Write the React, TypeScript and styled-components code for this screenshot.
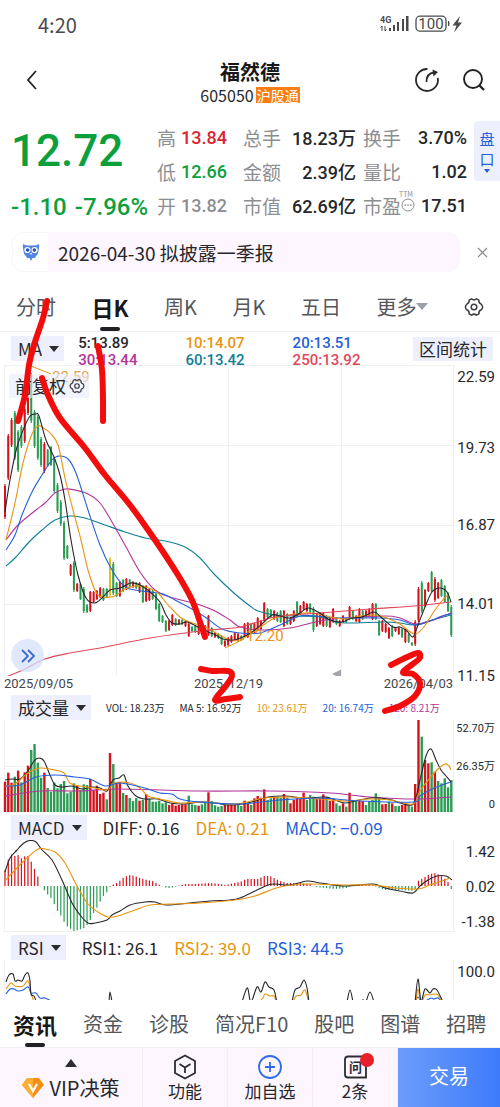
import React from "react";
import styled, { createGlobalStyle } from "styled-components";

const CJK = `"Noto Sans CJK SC", sans-serif`;
const NUM = `Roboto, "Noto Sans CJK SC", sans-serif`;

const c = {
  ink: "#26272b",
  grey: "#8d8e92",
  red: "#d5131c",
  green: "#2c9c54",
  price: "#0d9f3c",
  orange: "#e8940f",
  blue: "#2560d8",
  magenta: "#b5349b",
  teal: "#0f7f96",
  rose: "#e0495a",
  chip: "#edf0fc",
  line: "#f0f0f2",
};

const Global = createGlobalStyle`
  *, *::before, *::after { box-sizing: border-box; }
  body { margin: 0; background: #fff; color: ${c.ink}; font-family: ${CJK}; }
  button, select { font: inherit; color: inherit; border: 0; padding: 0; margin: 0; background: none; cursor: pointer; }
  svg { display: block; }
  dl, dd, dt, h1, p { margin: 0; }
`;

/* ---------- chart data ---------- */

type Pt = [number, number];

const curve = (p: Pt[]) => {
  let d = `M${p[0][0]} ${p[0][1]}`;
  for (let i = 0; i < p.length - 1; i++) {
    const a = p[i - 1] || p[i];
    const b = p[i];
    const e = p[i + 1];
    const f = p[i + 2] || e;
    d += `C${b[0] + (e[0] - a[0]) / 6} ${b[1] + (e[1] - a[1]) / 6} ${e[0] - (f[0] - b[0]) / 6} ${e[1] - (f[1] - b[1]) / 6} ${e[0]} ${e[1]}`;
  }
  return d;
};

const pts = (s: string): Pt[] => s.trim().split(/\s+/).map((q) => q.split(",").map(Number) as Pt);
const barX = (i: number, n: number) => 5 + (i * 446.3) / (n - 1);

const candles = `484-519R 434-480R 418-447R 411-460G 430-472G 425-448G 407-443R 390-415R 373-423G 410-448G 415-460G 437-467G 442-473R 449-467G 446-466G 457-493G 483-513G 500-526G 521-560G
545-559G 564-576R 561-592G 583-592R 583-600G 587-613G 604-613G 591-612R 591-603R 590-600R 587-598R 588-601G 588-598G 557-597Y 562-595G 582-597G 581-597R 579-592G 578-590R 579-588G 581-588R 582-589G 582-593R 585-603G 585-602R 588-601R 590-600G 593-610G 603-622G 615-623G 620-632G 620-631R 614-626R 618-626G 619-625R 619-625G 620-627R 623-637R 626-632G 625-633G 620-635R 627-635R 625-637R 615-636R 627-637G 632-638R 633-639G 635-645G 640-647R 637-646R 635-643R 632-640R 633-642R 635-641G 623-637R 622-638R
623-633G 623-633R 617-630R 620-630R 602-622R 608-618G 609-618G 610-620R 612-622G 610-623G 610-627R 613-625G 617-625R 610-622R 601-617G 605-615R 601-610R 603-612R 603-613G 607-632G 613-627R 612-625R 612-627R 615-627G 617-628R 608-623R 617-625G 620-627R 615-623R 618-623G 606-620R 610-620G 615-622R 608-623R 610-620G 610-618R 608-617R 603-620R 603-620G 620-636G 620-632R 623-633R 627-639R 625-637G 627-632R 627-635R 628-638G 628-643R 633-643G 642-646G 620-646R 587-622R 581-613G 589-607R 582-592R 571-592G 577-602R 582-599R 579-597G 585-603G 592-612G 605-637G`
  .trim()
  .split(/\s+/)
  .map((s) => {
    const [a, b] = s.slice(0, -1).split("-").map(Number);
    return { top: a, bottom: b, kind: s.slice(-1) };
  });

const volumes = `260R 233R 263R 245G 227R 262G 232R 212R 165G 147G 203G 248G 233R 279G 290G 262G 280G 267G 258G 295G 290G 265G 272R 285G 268G 270G 252R 285R 272R 297R 293R 313G 174R 207G 263R 263R 294G 300R 309G 318G 309G 317R 314G 297R 312G 320G 320G 317G 325G 322G 330R 325R 332R 330R 328R 328R 302G 328G 330G 332R 328G 322G 292R 318G 331G 335G 333G 330R 330R 328R 330R 325G 333G 317R 325R
330G 310R 303R 308R 283R 315G 310G 305R 305G 308G 297R 308G 325R 315R 310R 312R 293R 315G 300G 305G 312R 310R 298R 305G 318R 315R 325G 332G 325R 335G 293R 318G 318G 318R 318R 330G 318G 315G 295G 310G 328R 327R 320G 325R 333G 333G 330R 328R 330G 335G 267R 75R 125G 195R 205R 202G 230R 258G 265G 250G 277G 255G`
  .trim()
  .split(/\s+/)
  .map((s) => ({ h: (351 - Number(s.slice(0, -1))) / 3, kind: s.slice(-1) }));

const macdKeys = pts(`5,16 8,26 12,32 15,30 18,31 22,27 25,30 28,30 32,23 35,16 38,9 41,0 45,-5 48,-9 52,-13 55,-20 58,-26 62,-31 65,-38 68,-41 71,-43 74,-45 78,-44 81,-43 84,-42 88,-38 91,-33 94,-26 98,-20 101,-14 104,-9 108,-5 111,1 115,2 118,4 121,6 124,9 127,10 130,11 135,10 140,8 147,6 153,5 158,2 162,0 167,-2 171,-2 178,0 185,2 195,2 210,3 220,2 226,1 234,3 240,4 246,7 258,7 264,10 270,10 274,8 280,5 287,3 300,3 311,2 315,-1 325,-2 335,-3 347,-2 352,1 372,1 377,-1 385,-4 400,-4 414,-5 417,0 418,5 425,9 430,12 436,13 441,10 445,7 449,3 451,-3`);
const macdAt = (x: number) => {
  const k = macdKeys.findIndex((p) => p[0] >= x);
  if (k < 1) return macdKeys[k < 0 ? macdKeys.length - 1 : 0][1];
  const [x0, y0] = macdKeys[k - 1];
  const [x1, y1] = macdKeys[k];
  return y0 + ((y1 - y0) * (x - x0)) / (x1 - x0);
};

const averages: [string, string][] = [
  [c.teal, `6,566 15,558 30,541 42,530 55,520 70,516 85,518 105,525 125,532 145,538 165,541 185,547 200,558 215,575 235,594 250,606 258,611 275,615 295,616 320,617 335,622 350,623 385,622 400,623 415,625 432,620 451,615`],
  [c.magenta, `6,540 18,525 36,510 45,503 55,493 65,489 75,490 88,494 100,503 112,522 125,545 140,572 155,590 170,597 185,601 200,605 215,611 230,620 240,627 262,630 290,628 320,621 345,618 385,616 400,618 415,624 430,621 451,613`],
  [c.blue, `6,550 15,535 22,515 32,492 42,475 52,460 59,456 68,459 76,473 88,510 100,545 112,570 124,586 135,590 150,592 163,594 175,600 190,608 205,617 222,629 240,633 260,633 280,625 300,616 315,616 340,618 380,618 400,620 415,625 430,621 442,616 451,614`],
  [c.orange, `6,540 15,503 23,463 32,434 38,426 42,427 50,433 58,445 65,478 73,510 81,540 88,570 96,592 103,597 115,596 125,589 135,586 145,587 157,592 168,605 180,617 190,622 205,627 218,634 230,640 240,640 250,634 265,624 275,618 295,614 312,613 330,617 345,619 360,616 375,615 387,618 400,624 414,634 423,628 433,613 441,602 449,594`],
  [c.rose, `6,677 25,669 45,659 70,653 100,648 150,638 200,631 240,627 275,617 320,613 370,609 415,606 451,602`],
  [c.ink, `5,512 10,480 17,447 24,428 30,416 36,414 39,416 46,440 54,457 60,475 65,500 71,540 78,575 86,598 95,603 103,597 110,590 120,588 131,583 140,585 150,592 160,602 166,615 172,623 180,624 187,622 198,627 208,632 216,635 223,639 233,640 243,637 252,632 262,624 272,615 280,616 290,618 300,613 308,608 318,612 330,620 342,622 352,618 362,617 374,612 382,618 393,627 400,627 407,631 413,637 418,625 425,607 432,592 440,588 447,592 451,602`],
];

const volumeLines: [string, string][] = [
  [c.magenta, `5,796 40,791 80,791 120,789 200,791 270,791 330,793 370,797 415,799 451,797`],
  [c.ink, `5,780 12,779 20,779 28,771 34,761 39,758 44,761 50,775 55,785 62,787 72,786 82,789 92,787 100,788 107,791 113,780 119,778 124,775 128,786 136,796 145,799 158,799 170,803 185,804 200,802 215,803 228,805 243,804 255,801 268,797 285,796 305,798 325,797 335,800 345,803 355,801 370,798 380,798 392,800 400,803 412,805 416,797 420,780 426,756 431,749 436,760 441,770 446,776 451,782`],
  [c.orange, `5,786 15,784 28,773 40,768 55,770 64,773 70,783 80,786 95,788 107,790 115,783 130,783 140,788 148,796 160,799 180,803 205,802 235,804 265,798 290,797 320,799 345,801 370,799 390,800 413,804 420,791 430,778 438,769 445,764 449,766 451,770`],
  [c.blue, `5,786 20,785 36,777 55,775 75,777 90,779 105,786 120,783 145,788 160,793 172,794 180,799 200,802 240,804 280,800 320,798 360,801 413,802 420,796 432,789 451,782`],
];

const macdLines: [string, string][] = [
  [c.ink, `5,872 10,858 17,850 24,843 30,840.500 36,842 42,850 52,860 62,880 72,903 80,915 88,923 95,923 107,920 112,915 120,911 130,905 145,902 155,902 166,905 190,903 210,901 230,900 240,898 255,891 268,885 275,884 290,885 307,881 320,883 345,886 373,884 385,888 400,891 413,893 420,886 428,880 437,876 446,876 452,880`],
  [c.orange, `5,881 15,870 28,857 38,849 45,849 55,852 65,863 78,888 88,904 98,912 108,917 118,916 135,910 150,905 170,904 200,903 235,900 255,896 280,887 307,884 345,885 373,885 395,888 418,889 430,885 442,881 450,878`],
];

const rsiLines: [string, string][] = [
  [c.blue, `6,994 10,989 14,989 18,991 23,990 27,987 29,988 31,993 36,993 40,998 45,998 51,1001`],
  [c.blue, `415,1003 418,997 421,1003`],
  [c.blue, `426,1001 431,998 434,999 438,998 442,1002`],
  [c.orange, `6,989 11,983 15,986 23,986 27,981 29,983 31,993 34,1002`],
  [c.orange, `259,1002 263,998 265,994 270,996 274,996 277,1003`],
  [c.orange, `293,1002 296,996 301,995 305,990 309,1003`],
  [c.orange, `416,1002 418,989 421,1003 425,995 430,995 434,994 438,995 442,1002`],
  [c.ink, `6,982 9,975 13,974 15,981 18,980 22,981 25,975 28,973 30,981 31,994 34,996 36,1001`],
  [c.ink, `109,1002 110,992 112,1002`],
  [c.ink, `242,1002 246,990 248,989 251,1002 257,987 261,992 265,982 269,987 274,990 277,1003`],
  [c.ink, `292,1002 295,990 300,987 304,980 307,988 309,1003`],
  [c.ink, `347,1002 350,990 353,1002`],
  [c.ink, `362,1000 364,1000`],
  [c.ink, `366,1002 370,992 374,1002`],
  [c.ink, `415,1003 418,979 421,1001 425,989 430,993 433,989 437,990 443,1002`],
];

const kindColor = (k: string) => (k === "R" ? c.red : k === "G" ? c.green : "#dfc01b");

/* ---------- shell ---------- */

const Page = styled.main`
  position: relative;
  width: 100%;
  overflow: hidden;
`;

const StatusBar = styled.div`
  display: flex;
  align-items: center;
  justify-content: space-between;
  height: 48px;
  padding: 0 38px;
  font-size: 20px;
  color: #4a4a4c;
`;

const StatusIcons = styled.div`
  display: flex;
  align-items: center;
`;

const Header = styled.header`
  display: grid;
  grid-template-columns: 80px 1fr 90px;
  align-items: center;
  height: 64px;
  padding: 0 14px 0 24px;
`;

const Heading = styled.div`
  display: flex;
  flex-direction: column;
  align-items: center;
  padding-top: 6px;
`;

const Title = styled.h1`
  font-size: 20px;
  line-height: 24px;
  font-weight: 700;
  color: #17171a;
`;

const Code = styled.p`
  display: flex;
  align-items: center;
  gap: 2px;
  font-size: 16px;
  line-height: 22px;
`;

const Market = styled.span`
  background: #fb7d13;
  color: #fff;
  font-size: 14px;
  line-height: 16px;
  padding: 0 1px;
`;

const HeaderActions = styled.div`
  display: flex;
  justify-content: flex-end;
  gap: 22px;
`;

/* ---------- quote ---------- */

const Quote = styled.section`
  display: flex;
  height: 111px;
  padding-top: 8px;
`;

const PriceBlock = styled.div`
  flex: 0 0 157px;
  padding-left: 11px;
  font-family: ${NUM};
  font-weight: 500;
  color: ${c.price};
  white-space: nowrap;
`;

const Price = styled.p`
  font-size: 44px;
  line-height: 62px;
`;

const Change = styled.p`
  display: flex;
  gap: 8px;
  font-size: 24px;
  line-height: 50px;
`;

const Stats = styled.dl`
  flex: 1;
  display: grid;
  grid-template-columns: 86fr 120fr 104fr;
  grid-auto-rows: 34px;
`;

const Stat = styled.div`
  display: flex;
  align-items: center;
  justify-content: space-between;
  white-space: nowrap;
  &:nth-child(3n + 1) { padding-right: 16px; }
  &:nth-child(3n + 2) { padding-right: 7px; }
`;

const StatName = styled.dt`
  position: relative;
  display: flex;
  align-items: center;
  font-size: 19px;
  color: ${c.grey};
`;

const StatValue = styled.dd<{ $color?: string }>`
  font-family: ${NUM};
  font-size: 18px;
  font-weight: 500;
  color: ${(p) => p.$color || c.ink};
`;

const Ttm = styled.sup`
  position: absolute;
  top: -2px;
  right: 2px;
  font-size: 7px;
  line-height: 8px;
`;

const PanelButton = styled.button`
  flex: 0 0 26px;
  height: 60px;
  margin: 1px 0 0 7px;
  display: flex;
  flex-direction: column;
  align-items: center;
  justify-content: center;
  background: ${c.chip};
  border-radius: 4px 0 0 4px;
  color: ${c.blue};
  font-size: 15px;
  line-height: 20px;
`;

const Notice = styled.section`
  display: flex;
  align-items: center;
  justify-content: space-between;
  height: 40px;
  margin: 9px 10px 10px 12px;
`;

const NoticeLink = styled.a`
  flex: 0 1 448px;
  display: flex;
  align-items: center;
  height: 40px;
  border-radius: 12px;
  border: 1px solid #f8f5fb;
  overflow: hidden;
  background: #fdf6ff;
  color: ${c.ink};
  text-decoration: none;
  font-size: 19px;
  white-space: nowrap;
`;

const NoticeIcon = styled.span`
  display: grid;
  place-items: center;
  width: 35px;
  height: 100%;
  margin-right: 10px;
  background: #fff;
`;

/* ---------- tabs ---------- */

const PeriodTabs = styled.nav`
  display: flex;
  align-items: center;
  justify-content: space-between;
  height: 50px;
  padding: 0 16px;
  border-bottom: 1px solid ${c.line};
`;

const SectionTabs = styled.nav`
  display: flex;
  align-items: center;
  gap: 26px;
  height: 47px;
  padding-left: 13px;
  overflow: hidden;
`;

const Tab = styled.button<{ $on?: boolean }>`
  position: relative;
  display: flex;
  align-items: center;
  height: 100%;
  flex: none;
  white-space: nowrap;
  font-size: ${(p) => (p.$on ? 22 : 20)}px;
  font-weight: ${(p) => (p.$on ? 700 : 400)};
  color: ${(p) => (p.$on ? "#18181b" : "#55565a")};
  &::after {
    content: "";
    display: ${(p) => (p.$on ? "block" : "none")};
    position: absolute;
    bottom: 0;
    left: calc(50% - 10px);
    width: 20px;
    height: 4px;
    border-radius: 2px;
    background: #202124;
  }
`;

const Caret = styled.span<{ $color?: string; $up?: boolean; $size?: number }>`
  width: 0;
  height: 0;
  border: ${(p) => p.$size || 5}px solid transparent;
  border-bottom-width: ${(p) => (p.$up ? (p.$size || 5) + 2 : 0)}px;
  border-top-width: ${(p) => (p.$up ? 0 : (p.$size || 5) + 1)}px;
  border-${(p) => (p.$up ? "bottom" : "top")}-color: ${(p) => p.$color || "#2b2c30"};
`;

/* ---------- charts ---------- */

const Picker = styled.label`
  display: flex;
  align-items: center;
  gap: 7px;
  height: 25px;
  padding: 0 5px 0 7px;
  background: ${c.chip};
  font-size: 17px;
  flex: none;
  select {
    appearance: none;
    field-sizing: content;
    outline: 0;
    line-height: 24px;
  }
`;

const LegendBar = styled.div`
  display: flex;
  align-items: center;
  height: 33px;
  padding: 0 7px 0 11px;
`;

const MaList = styled.div`
  flex: 1;
  display: grid;
  grid-template-columns: 106fr 106fr 119fr;
  margin-left: 14px;
  font-family: ${NUM};
  font-size: 15px;
  font-weight: 500;
  line-height: 17px;
  padding-top: 7px;
`;

const Tint = styled.span<{ $color: string }>`
  color: ${(p) => p.$color};
  white-space: nowrap;
`;

const RangeButton = styled.button`
  height: 24px;
  padding: 0 6px;
  background: ${c.chip};
  font-size: 17px;
  line-height: 24px;
  white-space: nowrap;
`;

const ChartRow = styled.div`
  position: relative;
  display: grid;
  grid-template-columns: 455fr 45fr;
`;

const Plot = styled.svg`
  width: 100%;
  height: auto;
`;

const Axis = styled.div<{ $rows: string; $small?: boolean }>`
  display: grid;
  grid-template-rows: ${(p) => p.$rows};
  align-content: start;
  justify-items: end;
  padding: 2px 5px 0 0;
  font-family: ${NUM};
  font-size: ${(p) => (p.$small ? 11 : 15)}px;
  line-height: ${(p) => (p.$small ? 14 : 20)}px;
  white-space: nowrap;
`;

const Dates = styled.div`
  display: flex;
  justify-content: space-between;
  padding: 0 2px 0 4px;
  font-family: ${NUM};
  font-size: 13px;
  line-height: 16px;
  color: #45464a;
`;

const Adjust = styled.button`
  position: absolute;
  top: 9px;
  left: 9px;
  display: flex;
  align-items: center;
  gap: 3px;
  height: 24px;
  padding: 0 4px 0 6px;
  background: rgba(232, 236, 252, 0.6);
  font-size: 17px;
  line-height: 24px;
`;

const Expand = styled.button`
  position: absolute;
  left: 11px;
  bottom: 20px;
  width: 33px;
  height: 33px;
  border-radius: 50%;
  background: rgba(214, 224, 250, 0.75);
  display: grid;
  place-items: center;
`;

const IndicatorBar = styled.div<{ $small?: boolean }>`
  display: flex;
  align-items: center;
  height: 25px;
  padding-left: 11px;
  gap: ${(p) => (p.$small ? 15 : 16)}px;
  font-size: ${(p) => (p.$small ? 10 : 17)}px;
  margin-top: 3px;
  white-space: nowrap;
`;

/* ---------- bottom bar ---------- */

const Toolbar = styled.footer`
  display: grid;
  grid-template-columns: 143fr 85fr 85fr 85fr 102fr;
  height: 60px;
  background: #fdf6ff;
  border-top: 1px solid #f1edf3;
`;

const Tool = styled.button<{ $vip?: boolean }>`
  position: relative;
  display: flex;
  flex-direction: column;
  align-items: center;
  justify-content: center;
  gap: ${(p) => (p.$vip ? 8 : 1)}px;
  padding-top: ${(p) => (p.$vip ? 4 : 0)}px;
  border-right: 1px solid #f3edf5;
  font-size: 17px;
  line-height: 20px;
`;

const VipRow = styled.span`
  display: flex;
  align-items: center;
  gap: 5px;
  font-size: 20px;
  line-height: 26px;
`;

const Dot = styled.i`
  position: absolute;
  top: 5px;
  right: 23px;
  width: 14px;
  height: 14px;
  border-radius: 50%;
  background: #e61f2b;
`;

const Trade = styled.button`
  background: linear-gradient(90deg, #6d9dfb, #3d7bfa);
  color: #fff;
  font-size: 20px;
  line-height: 24px;
  padding-bottom: 4px;
`;

const Marker = styled.svg`
  position: absolute;
  top: 0;
  left: 0;
  width: 100%;
  height: auto;
  pointer-events: none;
`;

/* ---------- pieces ---------- */

const Lines = ({ data }: { data: [string, string][] }) => (
  <g fill="none" strokeWidth="1.1" strokeLinejoin="round">
    {data.map(([color, p], i) => (
      <path key={i} d={curve(pts(p))} stroke={color} />
    ))}
  </g>
);

const Grid = ({ ys, top, bottom, xs = [4.5, 453.5] }: { ys: number[]; top: number; bottom: number; xs?: number[] }) => (
  <g stroke={c.line} strokeWidth="1">
    {ys.map((y) => (
      <path key={y} d={`M4 ${y + 0.5}H455`} />
    ))}
    {xs.map((x) => (
      <path key={x} d={`M${x} ${top}V${bottom}`} />
    ))}
  </g>
);

const Gear = ({ size }: { size: number }) => (
  <svg width={size} height={size} viewBox="0 0 20 20" fill="none" stroke="#3c3d41" strokeWidth="1.5" strokeLinejoin="round">
    <path d="M7.6 1.8Q10 4 12.4 1.8L14.9 3.2Q14.4 6.3 17.3 7.2Q18.6 8.6 18.6 10Q18.6 11.4 17.3 12.8Q14.4 13.7 14.9 16.8L12.4 18.2Q10 16 7.6 18.2L5.1 16.8Q5.6 13.7 2.7 12.8Q1.4 11.4 1.4 10Q1.4 8.6 2.7 7.2Q5.6 6.3 5.1 3.2Z" />
    <circle cx="10" cy="10" r="2.8" />
  </svg>
);

const Pick = ({ name, options }: { name: string; options: string[] }) => (
  <Picker>
    <select aria-label={name} defaultValue={options[0]}>
      {options.map((o) => (
        <option key={o}>{o}</option>
      ))}
    </select>
    <Caret />
  </Picker>
);

const stats: { name: string; value: string; color?: string; ttm?: boolean }[] = [
  { name: "高", value: "13.84", color: "#dc2430" },
  { name: "总手", value: "18.23万" },
  { name: "换手", value: "3.70%" },
  { name: "低", value: "12.66", color: c.price },
  { name: "金额", value: "2.39亿" },
  { name: "量比", value: "1.02" },
  { name: "开", value: "13.82", color: c.grey },
  { name: "市值", value: "62.69亿" },
  { name: "市盈", value: "17.51", ttm: true },
];

const ma: [string, string][] = [
  ["5:13.89", c.ink],
  ["10:14.07", c.orange],
  ["20:13.51", c.blue],
  ["30:13.44", c.magenta],
  ["60:13.42", c.teal],
  ["250:13.92", c.rose],
];

export default function App() {
  return (
    <Page>
      <Global />
      <StatusBar>
        <span>4:20</span>
        <StatusIcons>
          <svg width="82" height="18" viewBox="0 0 82 18" fill="#4a4a4c">
            <text x="0" y="8" fontSize="9" fontWeight="700" fontFamily="Roboto, sans-serif">4G</text>
            <path d="M2 11v5M.5 12.500L2 11M5 11v5M6.500 14.500L5 16" stroke="#4a4a4c" fill="none" />
            <rect x="9" y="13" width="2" height="3" />
            <rect x="13" y="10" width="2" height="6" />
            <rect x="17" y="7" width="2" height="9" />
            <rect x="22" y="4" width="2" height="12" />
            <rect x="26" y="1" width="2.500" height="15" />
            <rect x="36" y="1.200" width="30" height="15" rx="4" fill="none" stroke="#4a4a4c" strokeWidth="1.300" />
            <text x="51" y="14" fontSize="15" textAnchor="middle" fontFamily="Roboto, sans-serif">100</text>
            <path d="M68 6h1q1 3 0 5h-1z" />
            <path d="M80 1L72.500 10.500h4L74 17.500L82 7.500h-4z" />
          </svg>
        </StatusIcons>
      </StatusBar>

      <Header>
        <button aria-label="返回">
          <svg width="16" height="20" viewBox="0 0 16 20" fill="none" stroke="#222" strokeWidth="1.800">
            <path d="M12 1L4 10L12 19" />
          </svg>
        </button>
        <Heading>
          <Title>福然德</Title>
          <Code>
            605050<Market>沪股通</Market>
          </Code>
        </Heading>
        <HeaderActions>
          <button aria-label="分享">
            <svg width="26" height="26" viewBox="0 0 26 26" fill="none" stroke="#2a2b2e" strokeWidth="1.800">
              <path d="M13.500 2A11 11 0 1 0 23.800 11" />
              <path d="M12.500 15C12.500 9 15 6 20 5.500" />
              <path d="M18.500 2.500L24 5L19.500 9.500Z" fill="#2a2b2e" stroke="none" />
            </svg>
          </button>
          <button aria-label="搜索">
            <svg width="24" height="24" viewBox="0 0 24 24" fill="none" stroke="#222" strokeWidth="1.900">
              <circle cx="11" cy="11" r="9" />
              <path d="M17 17L22 22" strokeWidth="2.400" />
            </svg>
          </button>
        </HeaderActions>
      </Header>

      <Quote>
        <PriceBlock>
          <Price>12.72</Price>
          <Change>
            <span>-1.10</span>
            <span>-7.96%</span>
          </Change>
        </PriceBlock>
        <Stats>
          {stats.map((s) => (
            <Stat key={s.name}>
              <StatName>
                {s.name}
                {s.ttm && (
                  <>
                    <svg width="14" height="14" viewBox="0 0 14 14" fill="none" stroke={c.grey}>
                      <circle cx="7" cy="7" r="6" />
                      <path d="M3.500 7h1.500M6.300 7h1.500M9 7h1.500" strokeWidth="1.600" />
                    </svg>
                    <Ttm>TTM</Ttm>
                  </>
                )}
              </StatName>
              <StatValue $color={s.color}>{s.value}</StatValue>
            </Stat>
          ))}
        </Stats>
        <PanelButton>
          <span>盘</span>
          <span>口</span>
          <Caret $color={c.blue} $size={3} />
        </PanelButton>
      </Quote>

      <Notice>
        <NoticeLink href="#notice">
          <NoticeIcon>
            <svg width="18" height="18" viewBox="0 0 18 18">
              <path d="M1 1Q4 3 9 2.500Q14 3 17 1Q17.500 5 16.500 7Q17 11 14 13L13 15H10.500L9 18L7.500 15H5L4 13Q1 11 1.500 7Q.5 5 1 1Z" fill="#5585e4" />
              <circle cx="5.400" cy="7" r="3.100" fill="#fff" />
              <circle cx="12.600" cy="7" r="3.100" fill="#fff" />
              <circle cx="5.600" cy="7" r="1.800" fill="#2450b0" />
              <circle cx="12.400" cy="7" r="1.800" fill="#2450b0" />
              <path d="M8 10h2l-1 2z" fill="#fff" />
            </svg>
          </NoticeIcon>
          2026-04-30 拟披露一季报
        </NoticeLink>
        <button aria-label="关闭">
          <svg width="15" height="15" viewBox="0 0 15 15" stroke="#8a8a8e" strokeWidth="1.200">
            <path d="M3 3L12 12M12 3L3 12" />
          </svg>
        </button>
      </Notice>

      <PeriodTabs>
        <Tab>分时</Tab>
        <Tab $on>日K</Tab>
        <Tab>周K</Tab>
        <Tab>月K</Tab>
        <Tab>五日</Tab>
        <Tab>
          更多
          <Caret $color="#9a9ea6" $size={6} />
        </Tab>
        <button aria-label="设置">
          <Gear size={20} />
        </button>
      </PeriodTabs>

      <LegendBar>
        <Pick name="主图指标" options={["MA", "BOLL", "EXPMA"]} />
        <MaList>
          {ma.map(([t, color]) => (
            <Tint key={t} $color={color}>
              {t}
            </Tint>
          ))}
        </MaList>
        <RangeButton>区间统计</RangeButton>
      </LegendBar>

      <ChartRow>
        <div>
          <Plot viewBox="0 365 455 311" role="img" aria-label="日K线图">
            <Grid ys={[365, 445, 525, 604]} top={365} bottom={676} xs={[4.5, 116.5, 228.5, 341.5, 453.5]} />
            {candles.map((k, i) => {
              const h = k.bottom - k.top;
              const x = barX(i, candles.length);
              const wick = h > 22 ? 2 : 1;
              return (
                <g key={i} fill={kindColor(k.kind)}>
                  <rect x={x - 0.6} y={k.top} width="1.2" height={h} />
                  <rect x={x - 1} y={k.top + wick} width="2" height={h - wick * 2} />
                </g>
              );
            })}
            <Lines data={averages} />
            <path d="M31 366L51 374" stroke={c.orange} />
            <text x="52" y="382" fontSize="15" fontFamily="Roboto, sans-serif" fill="#e3a04c">22.59</text>
            <path d="M225 648L244 639" stroke={c.orange} />
            <text x="246" y="641" fontSize="15" fontFamily="Roboto, sans-serif" fill="#ee9214">12.20</text>
            <path d="M332 674L341 669.500V678.500Z" fill="#a3a7ab" />
          </Plot>
          <Dates>
            <span>2025/09/05</span>
            <span>2025/12/19</span>
            <span>2026/04/03</span>
          </Dates>
        </div>
        <Axis $rows="71px 77px 79px 72px 20px">
          <span>22.59</span>
          <span>19.73</span>
          <span>16.87</span>
          <span>14.01</span>
          <span>11.15</span>
        </Axis>
        <Adjust>
          前复权
          <Gear size={16} />
        </Adjust>
        <Expand aria-label="展开">
          <svg width="16" height="16" viewBox="0 0 16 16" fill="none" stroke="#3b6ad0" strokeWidth="1.800">
            <path d="M2 2L8 8L2 14M8 2L14 8L8 14" />
          </svg>
        </Expand>
      </ChartRow>

      <IndicatorBar $small>
        <Pick name="副图指标一" options={["成交量", "成交额"]} />
        <Tint $color={c.ink}>VOL: 18.23万</Tint>
        <Tint $color={c.ink}>MA 5: 16.92万</Tint>
        <Tint $color={c.orange}>10: 23.61万</Tint>
        <Tint $color={c.blue}>20: 16.74万</Tint>
        <Tint $color={c.magenta}>120: 8.21万</Tint>
      </IndicatorBar>
      <ChartRow>
        <Plot viewBox="0 720 455 92" role="img" aria-label="成交量图">
          <Grid ys={[766, 811]} top={720} bottom={812} />
          {volumes.map((v, i) => (
            <rect key={i} x={barX(i, volumes.length) - 1.2} y={812 - v.h} width="2.4" height={v.h} fill={kindColor(v.kind)} />
          ))}
          <Lines data={volumeLines} />
        </Plot>
        <Axis $rows="38px 38px 14px" $small>
          <span>52.70万</span>
          <span>26.35万</span>
          <span>0</span>
        </Axis>
      </ChartRow>

      <IndicatorBar>
        <Pick name="副图指标二" options={["MACD", "KDJ"]} />
        <Tint $color={c.ink}>DIFF: 0.16</Tint>
        <Tint $color={c.orange}>DEA: 0.21</Tint>
        <Tint $color={c.blue}>MACD: −0.09</Tint>
      </IndicatorBar>
      <ChartRow>
        <Plot viewBox="0 840 455 92" role="img" aria-label="MACD图">
          <Grid ys={[931]} top={840} bottom={932} />
          {volumes.map((_, i) => {
            const x = barX(i, volumes.length);
            const v = macdAt(x);
            return <rect key={i} x={x - 0.6} y={v > 0 ? 886 - v : 886} width="1.2" height={Math.abs(v)} fill={v > 0 ? c.red : c.green} />;
          })}
          <Lines data={macdLines} />
        </Plot>
        <Axis $rows="35px 35px 20px">
          <span>1.42</span>
          <span>0.02</span>
          <span>-1.38</span>
        </Axis>
      </ChartRow>

      <IndicatorBar>
        <Pick name="副图指标三" options={["RSI", "WR"]} />
        <Tint $color={c.ink}>RSI1: 26.1</Tint>
        <Tint $color={c.orange}>RSI2: 39.0</Tint>
        <Tint $color={c.blue}>RSI3: 44.5</Tint>
      </IndicatorBar>
      <ChartRow>
        <Plot viewBox="0 960 455 40" role="img" aria-label="RSI图">
          <Grid ys={[]} top={960} bottom={1000} />
          <Lines data={rsiLines} />
        </Plot>
        <Axis $rows="20px">
          <span>100.0</span>
        </Axis>
      </ChartRow>

      <SectionTabs>
        <Tab $on>资讯</Tab>
        <Tab>资金</Tab>
        <Tab>诊股</Tab>
        <Tab>简况F10</Tab>
        <Tab>股吧</Tab>
        <Tab>图谱</Tab>
        <Tab>招聘</Tab>
      </SectionTabs>

      <Toolbar>
        <Tool $vip>
          <Caret $up $size={6} />
          <VipRow>
            <svg width="22" height="20" viewBox="0 0 22 20">
              <path d="M5 0H17L22 7L11 20L0 7Z" fill="#f78f14" />
              <path d="M5 0H11V20L0 7Z" fill="#fbb033" />
              <path d="M7 6L11 13L15 6" fill="none" stroke="#fff" strokeWidth="2.200" />
            </svg>
            VIP决策
          </VipRow>
        </Tool>
        <Tool>
          <svg width="24" height="26" viewBox="0 0 24 26" fill="none" stroke="#2c2d31" strokeWidth="1.800" strokeLinejoin="round">
            <path d="M12 1.500L22 7V19L12 24.500L2 19V7Z" />
            <path d="M6.500 10L12 13.500L17.500 10M12 13.500V19" />
          </svg>
          功能
        </Tool>
        <Tool>
          <svg width="26" height="26" viewBox="0 0 26 26" fill="none" stroke="#2f6bea" strokeWidth="1.800">
            <circle cx="13" cy="13" r="11" />
            <path d="M8 13H18M13 8V18" />
          </svg>
          加自选
        </Tool>
        <Tool>
          <svg width="26" height="26" viewBox="0 0 26 26" fill="none" stroke="#2c2d31" strokeWidth="1.800">
            <path d="M6 2.500H21Q24 2.500 24 5.500V23.500H6Q3 23.500 3 20.500V5.500Q3 2.500 6 2.500Z" />
            <text x="13.500" y="18" fontSize="13" fontWeight="700" textAnchor="middle" fill="#2c2d31" stroke="none">问</text>
          </svg>
          2条
          <Dot />
        </Tool>
        <Trade>交易</Trade>
      </Toolbar>

      <Marker viewBox="0 0 500 1107" fill="none" stroke="#f20d0d" strokeWidth="6" strokeLinecap="round" strokeLinejoin="round" aria-hidden="true">
        <path d={curve(pts("47,301 43,318 34,345 29,365 25,395 18,421"))} />
        <path d={curve(pts("98,346 102,370 103,400 103,421"))} />
        <path d={curve(pts("42,378 48,395 60,418 85,448 105,475 130,505 155,540 178,575 192,600 200,622 205,637"))} />
        <path d={curve(pts("201,669 212,671 228,671 232,676 225,687 215,700 226,699 240,697"))} />
        <path d={curve(pts("391,665 405,658 418,653 419,659 403,672 413,674 420,683 415,696 400,706 385,711"))} />
      </Marker>
    </Page>
  );
}
